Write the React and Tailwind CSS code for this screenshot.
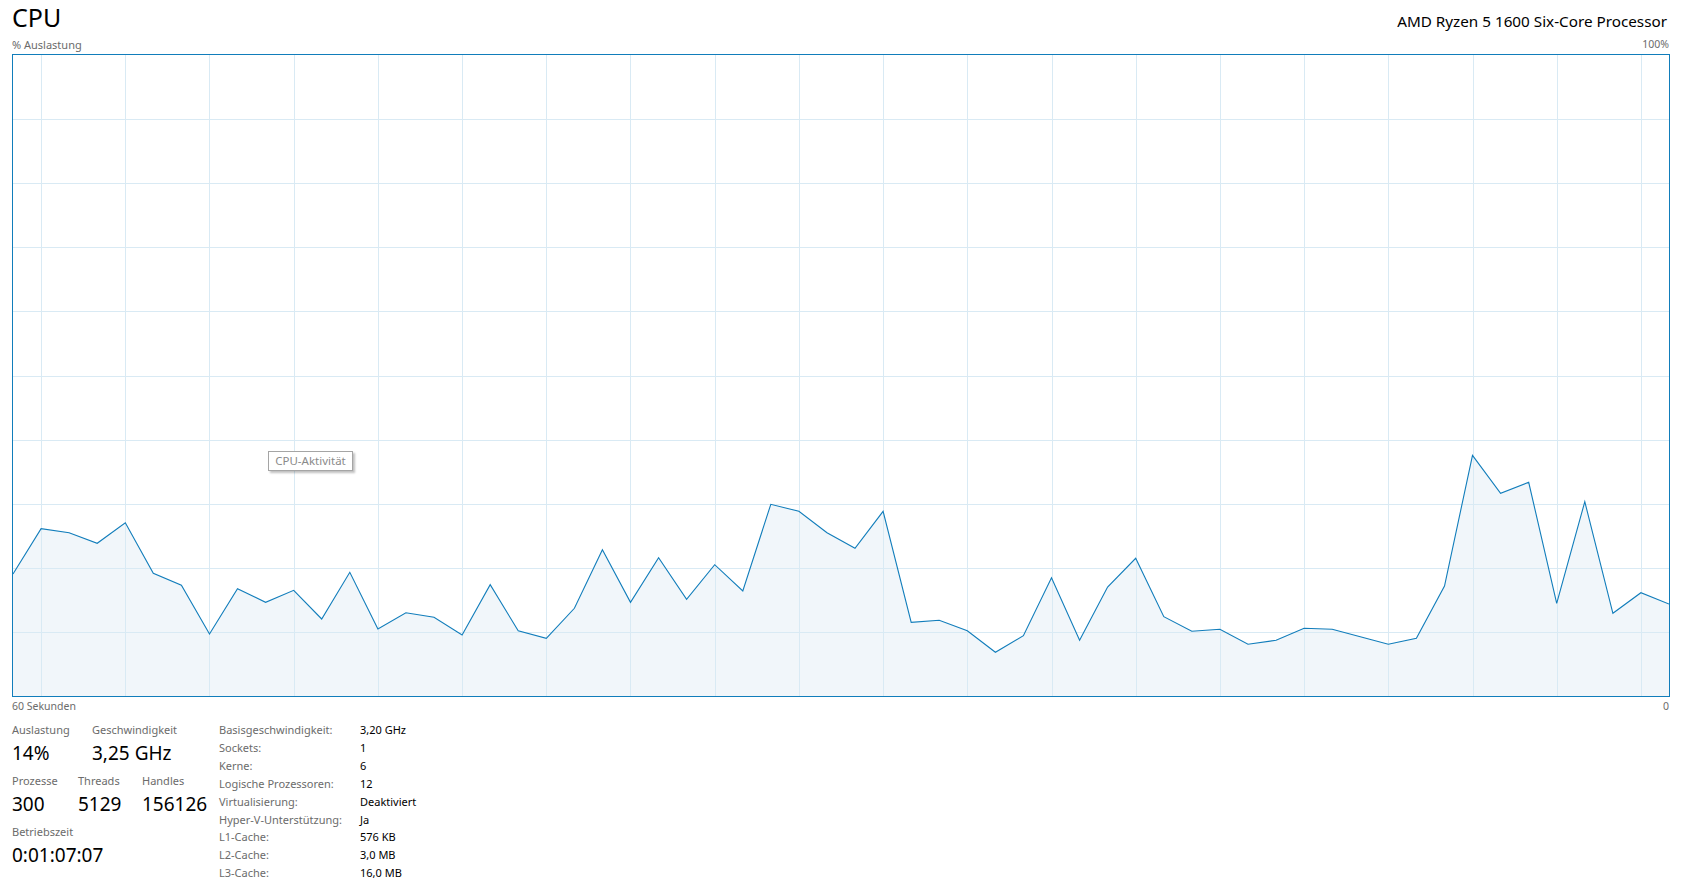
const usage = [
  519, 473.7, 477.7, 488.3, 467.7, 518.3, 530.3, 579, 533.7, 547.3,
  535.3, 564, 517.3, 574, 557.7, 562.3, 580, 529.7, 575.7, 583.3,
  553.3, 494.7, 547.3, 502.7, 544.3, 509.7, 536, 449.3, 456.3, 477.7,
  493.3, 456.3, 567.3, 565.3, 575.7, 597.3, 580.7, 522.7, 585.3, 532,
  503.3, 561.7, 576.3, 574.3, 589.3, 585.3, 573.3, 574.3, 581.8, 589.3,
  583.3, 531, 400.3, 438.3, 427.3, 548.3, 446.7, 558.3, 537.7, 549,
];

const W = 1656;
const H = 641;
const STEP = W / (usage.length - 1);

const specs = [
  ["Basisgeschwindigkeit:", "3,20 GHz"],
  ["Sockets:", "1"],
  ["Kerne:", "6"],
  ["Logische Prozessoren:", "12"],
  ["Virtualisierung:", "Deaktiviert"],
  ["Hyper-V-Unterstützung:", "Ja"],
  ["L1-Cache:", "576 KB"],
  ["L2-Cache:", "3,0 MB"],
  ["L3-Cache:", "16,0 MB"],
];

function Chart() {
  const pts = usage.map((y, i) => `${(i * STEP).toFixed(1)},${y}`);
  const line = "M" + pts.join(" L");
  const area = `M0,${H} L${pts.join(" L")} L${W},${H} Z`;

  return (
    <div className="relative h-[643px] w-[1658px] border border-[#117dbb] bg-white">
      <svg width={W} height={H} viewBox={`0 0 ${W} ${H}`} className="block">
        <path d={area} fill="#f1f6fa" />
        {[1, 2, 3, 4, 5, 6, 7, 8, 9].map((k) => (
          <line
            key={"h" + k}
            x1="0"
            x2={W}
            y1={Math.round(64.1 * k) + 0.5}
            y2={Math.round(64.1 * k) + 0.5}
            stroke="#d9eaf4"
            strokeWidth="1"
          />
        ))}
        {Array.from({ length: 20 }, (_, j) => {
          const x = Math.round(STEP * (1 + 3 * j)) + 0.5;
          return <line key={"v" + j} x1={x} x2={x} y1="0" y2={H} stroke="#d9eaf4" strokeWidth="1" />;
        })}
        <path d={line} fill="none" stroke="#117dbb" strokeWidth="1.1" strokeLinejoin="miter" />
      </svg>

      {/* hover tooltip */}
      <div className="absolute left-[255px] top-[396px] flex h-[20px] w-[85px] items-center justify-center border border-[#a5a5a5] bg-white text-[11.5px] leading-none text-[#8a8a8a] shadow-[2px_2px_2px_rgba(0,0,0,0.25)]">
        CPU-Aktivität
      </div>
    </div>
  );
}

export default function App() {
  return (
    <div className="h-[892px] w-[1693px] bg-white pl-3 pr-6 font-['Noto_Sans',sans-serif] text-black">
      <div className="flex h-[38px] items-baseline justify-between">
        <span className="text-[25px] leading-[34px]">CPU</span>
        <span className="pr-[2px] text-[15.25px]">AMD Ryzen 5 1600 Six-Core Processor</span>
      </div>
      <div className="flex h-[16px] justify-between text-[11px] leading-[13px] text-[#6b6b6b]">
        <span>% Auslastung</span>
        <span className="text-[10.5px]">100%</span>
      </div>

      <Chart />

      <div className="flex h-[20px] justify-between pt-[3px] text-[10.5px] leading-[13px] text-[#6b6b6b]">
        <span>60 Sekunden</span>
        <span>0</span>
      </div>

      <div className="flex pt-[4px]">
        <div className="flex w-[207px] flex-col gap-[4px]">
          <div className="flex">
            <Stat className="w-[80px]" label="Auslastung" value="14%" />
            <Stat label="Geschwindigkeit" value="3,25 GHz" />
          </div>
          <div className="flex">
            <Stat className="w-[66px]" label="Prozesse" value="300" />
            <Stat className="w-[64px]" label="Threads" value="5129" />
            <Stat label="Handles" value="156126" />
          </div>
          <Stat label="Betriebszeit" value="0:01:07:07" />
        </div>

        <div className="grid grid-cols-[141px_auto] text-[11px] leading-[17.9px]">
          {specs.map(([k, v]) => (
            <div key={k} className="contents">
              <span className="text-[#6b6b6b]">{k}</span>
              <span>{v}</span>
            </div>
          ))}
        </div>
      </div>
    </div>
  );
}

function Stat({ label, value, className = "" }) {
  return (
    <div className={"flex flex-col " + className}>
      <span className="text-[11px] leading-[17px] text-[#6b6b6b]">{label}</span>
      <span className="text-[19px] leading-[30px]">{value}</span>
    </div>
  );
}
